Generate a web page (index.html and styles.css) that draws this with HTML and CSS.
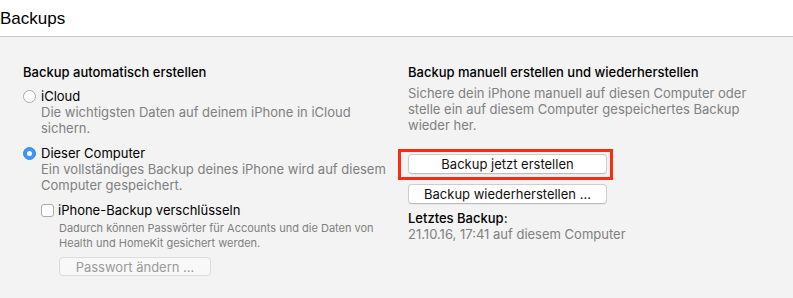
FILE: index.html
```html
<!DOCTYPE html>
<html lang="de">
<head>
<meta charset="utf-8">
<title>Backups</title>
<link rel="stylesheet" href="styles.css">
</head>
<body>
<header class="page-head">
  <h1 class="page-title">Backups</h1>
</header>
<main class="panel">
  <section class="col col-left">
    <h2 class="section-title">Backup automatisch erstellen</h2>
    <div class="option">
      <span class="radio"></span>
      <span class="option-label">iCloud</span>
    </div>
    <p class="desc desc-left">Die wichtigsten Daten auf deinem iPhone in iCloud sichern.</p>
    <div class="option option-second">
      <span class="radio radio-on"></span>
      <span class="option-label">Dieser Computer</span>
    </div>
    <p class="desc desc-left">Ein vollständiges Backup deines iPhone wird auf diesem Computer gespeichert.</p>
    <div class="sub">
      <div class="option option-check">
        <span class="checkbox"></span>
        <span class="option-label">iPhone-Backup verschlüsseln</span>
      </div>
      <div class="sub-body">
        <p class="small-desc">Dadurch können Passwörter für Accounts und die Daten von Health und HomeKit gesichert werden.</p>
        <button class="btn btn-disabled" disabled>Passwort ändern ...</button>
      </div>
    </div>
  </section>
  <section class="col col-right">
    <h2 class="section-title">Backup manuell erstellen und wiederherstellen</h2>
    <p class="desc desc-right">Sichere dein iPhone manuell auf diesen Computer oder stelle ein auf diesem Computer gespeichertes Backup wieder her.</p>
    <div class="buttons">
      <div class="highlight-wrap">
        <button class="btn">Backup jetzt erstellen</button>
        <span class="highlight"></span>
      </div>
      <button class="btn">Backup wiederherstellen ...</button>
    </div>
    <h3 class="last-title">Letztes Backup:</h3>
    <p class="last-value">21.10.16, 17:41 auf diesem Computer</p>
  </section>
</main>
</body>
</html>
```

FILE: styles.css
```css
* { box-sizing: border-box; }
html, body { margin: 0; padding: 0; }
body {
  width: 793px;
  height: 298px;
  overflow: hidden;
  background: #f3f3f3;
  font-family: Inter, "Liberation Sans", Arial, sans-serif;
  font-size: 13px;
  color: #111;
}
.page-head {
  height: 37px;
  background: #fff;
  border-bottom: 1px solid #c9c9c9;
}
.page-title {
  margin: 0;
  padding-top: 9px;
  font-family: "Liberation Sans", Arial, sans-serif;
  font-weight: normal;
  font-size: 17px;
  line-height: 20px;
  color: #000;
}
.panel {
  display: grid;
  grid-template-columns: 385px 1fr;
  padding: 27px 0 0 23px;
}
.section-title {
  margin: 0;
  font-size: 13px;
  font-weight: 450;
  line-height: 16px;
  color: #000;
}
.option {
  display: flex;
  align-items: center;
  gap: 5px;
  margin-top: 8px;
  height: 16px;
}
.option-second { margin-top: 9px; }
.option-label { line-height: 16px; color: #000; }
.radio {
  width: 13px;
  height: 13px;
  border-radius: 50%;
  background: #fff;
  border: 1px solid #a9a9a9;
  flex: none;
  position: relative;
}
.radio-on {
  background: #3d97f7;
  border-color: #3289ec;
}
.radio-on::after {
  content: "";
  position: absolute;
  left: 3px;
  top: 3px;
  width: 5px;
  height: 5px;
  border-radius: 50%;
  background: #fff;
}
.desc {
  margin: 0;
  color: #808080;
  line-height: 16px;
}
.desc-left { padding-left: 18px; max-width: 365px; }
.desc-right { margin-top: 5px; max-width: 345px; }
.sub { padding-left: 18px; }
.option-check { margin-top: 9px; gap: 4px; }
.checkbox {
  width: 13px;
  height: 13px;
  border-radius: 3px;
  background: #fff;
  border: 1px solid #aaa;
  flex: none;
}
.sub-body { padding-left: 18px; }
.small-desc {
  margin: 3px 0 0 0;
  font-size: 11px;
  line-height: 15px;
  color: #808080;
  max-width: 330px;
}
.btn {
  display: block;
  width: 199px;
  height: 20px;
  padding: 0;
  font-family: inherit;
  font-size: 13px;
  line-height: 18px;
  color: #111;
  background: #fff;
  border: 1px solid #cdcdcd;
  border-bottom-color: #bdbdbd;
  border-radius: 4px;
  box-shadow: 0 1px 0 rgba(0,0,0,0.04);
  text-align: center;
}
.btn-disabled {
  width: 152px;
  height: 19px;
  margin-top: 6px;
  color: #9a9a9a;
  background: #f8f8f8;
  border-color: #dcdcdc;
  box-shadow: none;
}
.buttons {
  display: flex;
  flex-direction: column;
  gap: 10px;
  margin-top: 21px;
}
.highlight-wrap { position: relative; }
.highlight {
  position: absolute;
  left: -10px;
  top: -5px;
  width: 215px;
  height: 31px;
  border: 3px solid #ff2a12;
  pointer-events: none;
}
.last-title {
  margin: 6px 0 0 0;
  font-size: 13px;
  font-weight: 450;
  line-height: 16px;
  color: #000;
}
.last-value {
  margin: 0;
  line-height: 16px;
  color: #808080;
}
```
